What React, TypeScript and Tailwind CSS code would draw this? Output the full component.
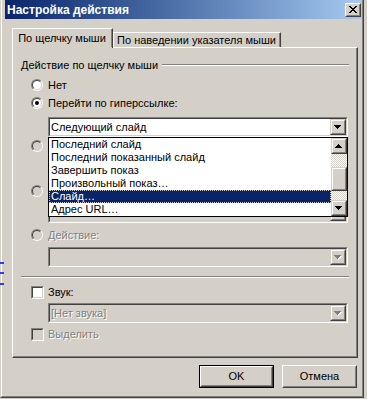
const sunkenOuter = 'border border-t-[#808080] border-l-[#808080] border-r-white border-b-white';
const sunkenInner = 'border border-t-[#404040] border-l-[#404040] border-r-[#d4d0c8] border-b-[#d4d0c8]';
const raisedOuter = 'border border-t-[#d4d0c8] border-l-[#d4d0c8] border-r-[#404040] border-b-[#404040]';
const raisedInner = 'border border-t-white border-l-white border-r-[#808080] border-b-[#808080]';
const btnOuter = 'border border-t-white border-l-white border-r-[#404040] border-b-[#404040]';
const btnInner = 'border border-t-[#d4d0c8] border-l-[#d4d0c8] border-r-[#808080] border-b-[#808080]';
const disabledText = 'text-[#808080] [text-shadow:1px_1px_0_#fff]';

function Arrow({ up, disabled }: { up?: boolean; disabled?: boolean }) {
  const d = up
    ? 'M3 0h1v1h1v1h1v1h1v1h-7v-1h1v-1h1v-1h1z'
    : 'M0 0h7v1h-1v1h-1v1h-1v1h-1v-1h-1v-1h-1v-1h-1z';
  return (
    <svg width="8" height="5" viewBox="0 0 8 5" shapeRendering="crispEdges">
      {disabled && <path d={d} fill="#fff" transform="translate(1 1)" />}
      <path d={d} fill={disabled ? '#808080' : '#000'} />
    </svg>
  );
}

function ScrollButton({ up, className = '' }: { up?: boolean; className?: string }) {
  return (
    <div className={`w-[16px] h-[16px] bg-[#d4d0c8] ${raisedOuter} ${className}`}>
      <div className={`w-full h-full flex items-center justify-center ${raisedInner}`}>
        <Arrow up={up} />
      </div>
    </div>
  );
}

function Radio({ checked, disabled }: { checked?: boolean; disabled?: boolean }) {
  return (
    <div className="w-[12px] h-[12px] shrink-0 rounded-full border border-t-[#808080] border-l-[#808080] border-r-white border-b-white">
      <div
        className={`w-full h-full rounded-full flex items-center justify-center border border-t-[#404040] border-l-[#404040] border-r-[#d4d0c8] border-b-[#d4d0c8] ${
          disabled ? 'bg-[#d4d0c8]' : 'bg-white'
        }`}
      >
        {checked && <div className="w-[4px] h-[4px] rounded-full bg-black" />}
      </div>
    </div>
  );
}

function Checkbox({ disabled }: { disabled?: boolean }) {
  return (
    <div className={`w-[13px] h-[13px] shrink-0 ${sunkenOuter}`}>
      <div className={`w-full h-full ${sunkenInner} ${disabled ? 'bg-[#d4d0c8]' : 'bg-white'}`} />
    </div>
  );
}

function Combo({ text, disabled, className = '' }: { text?: string; disabled?: boolean; className?: string }) {
  return (
    <div className={`h-[20px] w-[300px] ${sunkenOuter} ${className}`}>
      <div className={`h-full flex ${sunkenInner} ${disabled ? 'bg-[#d4d0c8]' : 'bg-white'}`}>
        <div className={`flex-1 flex items-center pl-[1px] ${disabled ? disabledText : ''}`}>{text}</div>
        <div className={`w-[16px] h-[16px] bg-[#d4d0c8] ${raisedOuter}`}>
          <div className={`w-full h-full flex items-center justify-center ${raisedInner}`}>
            <Arrow disabled={disabled} />
          </div>
        </div>
      </div>
    </div>
  );
}

function Etched({ className = '' }: { className?: string }) {
  return <div className={`h-[2px] border-t border-t-[#808080] border-b border-b-white ${className}`} />;
}

function Button({ label, isDefault }: { label: string; isDefault?: boolean }) {
  return (
    <div className={`w-[75px] h-[23px] ${isDefault ? 'border border-black' : ''}`}>
      <div className={`w-full h-full ${btnOuter}`}>
        <div className={`w-full h-full flex items-center justify-center ${btnInner}`}>{label}</div>
      </div>
    </div>
  );
}

const items = [
  'Последний слайд',
  'Последний показанный слайд',
  'Завершить показ',
  'Произвольный показ…',
  'Слайд…',
  'Адрес URL…',
];

export default function App() {
  return (
    <div className="relative w-[367px] h-[399px] overflow-hidden bg-[#d4d0c8] text-[11px] leading-none text-black font-['Liberation_Sans',Arial,sans-serif]">
      <div className="w-[364px] h-[398px] border-l border-l-[#d4d0c8] border-r border-r-[#404040] border-b border-b-[#404040]">
        <div className="h-full flex flex-col pl-[3px] border-l border-l-white border-r border-r-[#808080] border-b border-b-[#808080]">
          {/* title bar */}
          <div className="h-[19px] shrink-0 flex items-center justify-between pl-[2px] pr-[1px] bg-linear-to-r from-[#0a246a] to-[#a6caf0]">
            <span className="text-white font-bold text-[12px]">Настройка действия</span>
            <div className={`w-[16px] h-[14px] bg-[#d4d0c8] ${btnOuter}`}>
              <div className={`w-full h-full flex items-center justify-center ${btnInner}`}>
                <svg width="8" height="7" viewBox="0 0 8 7" shapeRendering="crispEdges">
                  {[0, 1, 2, 3, 4, 5, 6].map((y) => (
                    <g key={y}>
                      <rect x={y} y={y} width="2" height="1" fill="#000" />
                      <rect x={6 - y} y={y} width="2" height="1" fill="#000" />
                    </g>
                  ))}
                </svg>
              </div>
            </div>
          </div>

          {/* tabs */}
          <div className="mt-[9px] ml-[7px] h-[19px] flex items-end">
            <div className="relative z-10 -mb-px h-[20px] w-[101px] flex items-center justify-center pb-[1px] bg-[#d4d0c8] border-t border-l border-white border-r border-r-[#404040]">
              <div className="h-full w-full flex items-center justify-center border-r border-r-[#808080]">По щелчку мыши</div>
            </div>
            <div className="h-[15px] w-[168px] flex items-center justify-center border-t border-l border-white border-r border-r-[#404040]">
              <div className="h-full w-full flex items-center justify-center border-r border-r-[#808080]">
                По наведении указателя мыши
              </div>
            </div>
          </div>

          {/* panel */}
          <div className="relative ml-[7px] w-[346px] h-[311px] border-t border-l border-white border-r border-b border-r-[#404040] border-b-[#404040]">
            <div className="h-full flex flex-col pl-[8px] pr-[7px] border-r border-b border-[#808080]">
              <div className="mt-[10px] h-[14px] flex items-center">
                <span>Действие по щелчку мыши</span>
                <Etched className="flex-1 ml-[4px]" />
              </div>

              <div className="mt-[6px] h-[14px] ml-[10px] flex items-center gap-[5px]">
                <Radio />
                <span>Нет</span>
              </div>
              <div className="mt-[4px] h-[14px] ml-[10px] flex items-center gap-[5px]">
                <Radio checked />
                <span>Перейти по гиперссылке:</span>
              </div>
              <Combo text="Следующий слайд" className="mt-[7px] ml-[27px]" />

              {/* rows hidden under the open list */}
              <div className="mt-[2px] h-[14px] ml-[10px] flex items-center">
                <Radio disabled />
              </div>
              <div className="mt-[4px] h-[20px] ml-[27px] w-[300px]" />
              <div className="mt-[7px] h-[14px] ml-[10px] flex items-center">
                <Radio disabled />
              </div>
              <Combo disabled className="mt-[5px] ml-[27px]" />

              <div className="mt-[5px] h-[14px] ml-[10px] flex items-center gap-[5px]">
                <Radio disabled />
                <span className={disabledText}>Действие:</span>
              </div>
              <Combo disabled className="mt-[5px] ml-[27px]" />

              <Etched className="mt-[9px]" />

              <div className="mt-[7px] h-[14px] ml-[10px] flex items-center gap-[4px]">
                <Checkbox />
                <span>Звук:</span>
              </div>
              <Combo disabled text="[Нет звука]" className="mt-[4px] ml-[27px]" />
              <div className="mt-[4px] h-[14px] ml-[10px] flex items-center gap-[4px]">
                <Checkbox disabled />
                <span className={disabledText}>Выделить</span>
              </div>
            </div>

            {/* open dropdown list */}
            <div className="absolute z-20 left-[35px] top-[89px] w-[300px] h-[80px] flex bg-white border border-black">
              <div className="flex-1 flex flex-col">
                {items.map((it, i) =>
                  i === 4 ? (
                    <div key={it} className="h-[13px] flex items-center pl-[1px] bg-[#0a246a] text-white border border-dotted border-[#c8c8c8]">
                      {it}
                    </div>
                  ) : (
                    <div key={it} className="h-[13px] flex items-center pl-[2px]">
                      {it}
                    </div>
                  ),
                )}
              </div>
              <div className="w-[16px] flex flex-col bg-[repeating-conic-gradient(#d4d0c8_0_25%,#fff_0_50%)] bg-[length:2px_2px]">
                <ScrollButton up />
                <div className="h-[13px]" />
                <div className={`h-[24px] bg-[#d4d0c8] ${raisedOuter}`}>
                  <div className={`w-full h-full ${raisedInner}`} />
                </div>
                <div className="flex-1" />
                <ScrollButton />
              </div>
            </div>
          </div>

          {/* buttons */}
          <div className="mt-[7px] flex justify-end gap-[8px] pr-[5px]">
            <Button label="OK" isDefault />
            <Button label="Отмена" />
          </div>
        </div>
      </div>

      {/* bits of the slide behind the dialog */}
      <div className="absolute left-0 top-[262px] w-[4px] h-[2px] bg-[#2a3cff]" />
      <div className="absolute left-0 top-[272px] w-[4px] h-[2px] bg-[#2a3cff]" />
      <div className="absolute left-0 top-[283px] w-[4px] h-[2px] bg-[#2a3cff]" />
    </div>
  );
}
